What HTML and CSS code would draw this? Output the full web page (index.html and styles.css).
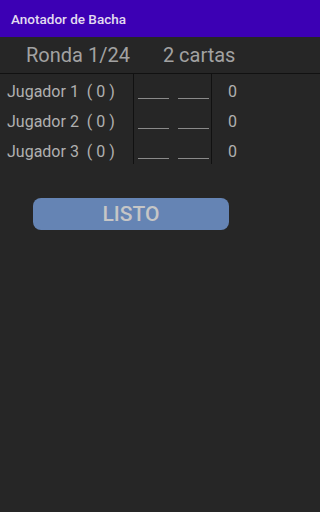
FILE: index.html
```html
<!DOCTYPE html>
<html lang="es">
<head>
<meta charset="utf-8">
<title>Anotador de Bacha</title>
<link rel="stylesheet" href="styles.css">
</head>
<body>
<header class="appbar">Anotador de Bacha</header>
<main class="content">
  <div class="round">
    <span class="round-num">Ronda 1/24</span>
    <span class="round-cards">2 cartas</span>
  </div>
  <div class="table">
    <div class="cell name">Jugador 1  ( 0 )</div>
    <div class="cell bets"><span class="blank"></span><span class="blank"></span></div>
    <div class="cell score">0</div>
    <div class="cell name">Jugador 2  ( 0 )</div>
    <div class="cell bets"><span class="blank"></span><span class="blank"></span></div>
    <div class="cell score">0</div>
    <div class="cell name">Jugador 3  ( 0 )</div>
    <div class="cell bets"><span class="blank"></span><span class="blank"></span></div>
    <div class="cell score">0</div>
  </div>
  <div class="actions">
    <button class="btn">LISTO</button>
  </div>
</main>
</body>
</html>
```

FILE: styles.css
```css
html, body {
  margin: 0;
  padding: 0;
  background: #262626;
  font-family: Roboto, "Noto Sans", sans-serif;
}
.appbar {
  height: 37px;
  background: #3c00b4;
  color: #e2dcf0;
  font-size: 13.5px;
  font-weight: 500;
  display: flex;
  align-items: center;
  padding-left: 11px;
  box-sizing: border-box;
}
.round {
  height: 37px;
  display: flex;
  align-items: center;
  color: #a2a2a2;
  font-size: 20px;
  border-bottom: 1px solid #111;
  box-sizing: border-box;
}
.round-num {
  margin-left: 26px;
}
.round-cards {
  margin-left: 33px;
}
.table {
  display: grid;
  grid-template-columns: 134px 78px 50px;
  grid-auto-rows: 30px;
}
.cell {
  display: flex;
  align-items: center;
  color: #b0b0b0;
  font-size: 16px;
}
.name {
  padding-left: 7px;
  white-space: pre;
  border-right: 1px solid #111;
  box-sizing: border-box;
  padding-top: 4px;
}
.bets {
  border-right: 1px solid #111;
  box-sizing: border-box;
  padding-left: 4px;
  gap: 9px;
  align-items: flex-end;
  padding-bottom: 5px;
}
.blank {
  width: 31px;
  height: 0;
  border-bottom: 1px solid #8a8a8a;
}
.score {
  padding-left: 16px;
  padding-top: 4px;
}
.actions {
  padding-top: 34px;
  display: flex;
  padding-left: 33px;
}
.btn {
  width: 196px;
  height: 32px;
  border: none;
  border-radius: 8px;
  background: #6584b4;
  color: #c6c6c6;
  font-family: Roboto, "Noto Sans", sans-serif;
  font-size: 21px;
  font-weight: 500;
  padding: 0;
}
```
